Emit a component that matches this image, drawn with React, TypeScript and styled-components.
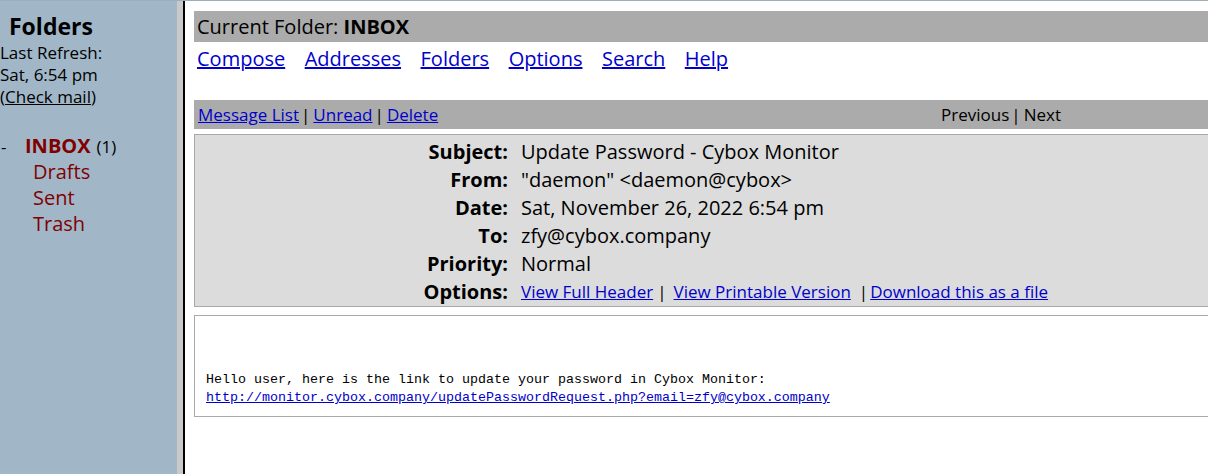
import React from "react";
import styled, { createGlobalStyle } from "styled-components";

const Global = createGlobalStyle`
  html, body { margin: 0; padding: 0; background: #ffffff; }
  body { font-family: "Open Sans", "Noto Sans", sans-serif; overflow: hidden; }
  #root { width: 1208px; height: 474px; }
`;

const Page = styled.div`
  display: flex;
  width: 1208px;
  height: 474px;
  border-top: 1px solid #9fafba;
  box-sizing: border-box;
  overflow: hidden;
`;

const LeftFrame = styled.aside`
  width: 177px;
  flex: none;
  background: #a1b7c8;
  color: #000;
  padding-top: 9px;
  box-sizing: border-box;
`;

const FrameBorder = styled.div`
  width: 6px;
  flex: none;
  background: #c9c9c9;
  border-right: 2px solid #000;
`;

const Title = styled.div`
  font-weight: 700;
  font-size: 23px;
  line-height: 32px;
  padding-left: 9px;
`;

const Info = styled.div`
  font-size: 17px;
  line-height: 22px;
`;

const CheckLink = styled.a`
  color: #000;
  text-decoration: underline;
`;

const FolderList = styled.div`
  margin-top: 25px;
  display: flex;
  flex-direction: column;
`;

const FolderRow = styled.div<{ $indent: number }>`
  display: flex;
  align-items: baseline;
  height: 26px;
  line-height: 26px;
  padding-left: ${(p) => p.$indent}px;
  white-space: nowrap;
`;

const Dash = styled.span`
  font-size: 17px;
  width: 24px;
`;

const FolderName = styled.a<{ $bold?: boolean }>`
  color: #800000;
  font-size: 20px;
  font-weight: ${(p) => (p.$bold ? 700 : 400)};
  text-decoration: none;
`;

const Count = styled.span`
  font-size: 17px;
  margin-left: 6px;
`;

const RightFrame = styled.main`
  flex: 1;
  padding: 10px 0 0 9px;
  min-width: 0;
`;

const FolderBar = styled.div`
  background: #ababab;
  height: 31px;
  line-height: 31px;
  font-size: 20px;
  padding-left: 3px;
  color: #000;
  white-space: nowrap;
`;

const Nav = styled.nav`
  display: flex;
  gap: 19.5px;
  padding-left: 3px;
  height: 58px;
  padding-top: 3px;
  box-sizing: border-box;
  line-height: 28px;
`;

const NavLink = styled.a`
  font-size: 20px;
  color: #0000cc;
  text-decoration: underline;
`;

const MsgBar = styled.div`
  background: #ababab;
  height: 29px;
  display: flex;
  align-items: center;
  justify-content: space-between;
  font-size: 17px;
  padding-left: 4px;
  padding-right: 147px;
  white-space: nowrap;
`;

const SmallLink = styled.a`
  color: #0000cc;
  text-decoration: underline;
`;

const Pipe = styled.span<{ $l?: number; $r?: number }>`
  padding-left: ${(p) => p.$l ?? 2}px;
  padding-right: ${(p) => p.$r ?? 3}px;
`;

const HeaderBox = styled.section`
  margin-top: 5px;
  background: #dcdcdc;
  border: 1px solid #a9a9a9;
  border-right: none;
  padding-top: 2px;
  padding-bottom: 1px;
  display: grid;
  grid-template-columns: 313px 1fr;
  grid-auto-rows: 28px;
  align-items: center;
`;

const Label = styled.div`
  text-align: right;
  font-weight: 700;
  font-size: 20px;
  white-space: nowrap;
`;

const Value = styled.div<{ $small?: boolean }>`
  padding-left: 13px;
  font-size: ${(p) => (p.$small ? 17 : 20)}px;
  white-space: nowrap;
`;

const BodyBox = styled.section`
  margin-top: 8px;
  border: 1px solid #a9a9a9;
  border-right: none;
  padding: 55px 0 10px 11px;
  height: 102px;
  box-sizing: border-box;
`;

const Pre = styled.pre`
  margin: 0;
  font-family: "Liberation Mono", "DejaVu Sans Mono", monospace;
  font-size: 13.33px;
  line-height: 18px;
  color: #000;
`;

const BodyLink = styled.a`
  color: #0000cc;
  text-decoration: underline;
`;

const headers: [string, string][] = [
  ["Subject:", "Update Password - Cybox Monitor"],
  ["From:", "\"daemon\" <daemon@cybox>"],
  ["Date:", "Sat, November 26, 2022 6:54 pm"],
  ["To:", "zfy@cybox.company"],
  ["Priority:", "Normal"],
];

export default function App() {
  return (
    <>
      <Global />
      <Page>
        <LeftFrame>
          <Title>Folders</Title>
          <Info>Last Refresh:</Info>
          <Info>Sat, 6:54 pm</Info>
          <Info>
            (<CheckLink href="#">Check mail</CheckLink>)
          </Info>
          <FolderList>
            <FolderRow $indent={1}>
              <Dash>-</Dash>
              <FolderName $bold href="#">INBOX</FolderName>
              <Count>(1)</Count>
            </FolderRow>
            <FolderRow $indent={33}>
              <FolderName href="#">Drafts</FolderName>
            </FolderRow>
            <FolderRow $indent={33}>
              <FolderName href="#">Sent</FolderName>
            </FolderRow>
            <FolderRow $indent={33}>
              <FolderName href="#">Trash</FolderName>
            </FolderRow>
          </FolderList>
        </LeftFrame>
        <FrameBorder />
        <RightFrame>
          <FolderBar>
            Current Folder: <b>INBOX</b>
          </FolderBar>
          <Nav>
            <NavLink href="#">Compose</NavLink>
            <NavLink href="#">Addresses</NavLink>
            <NavLink href="#">Folders</NavLink>
            <NavLink href="#">Options</NavLink>
            <NavLink href="#">Search</NavLink>
            <NavLink href="#">Help</NavLink>
          </Nav>
          <MsgBar>
            <span>
              <SmallLink href="#">Message List</SmallLink>
              <Pipe>|</Pipe>
              <SmallLink href="#">Unread</SmallLink>
              <Pipe>|</Pipe>
              <SmallLink href="#">Delete</SmallLink>
            </span>
            <span>
              Previous<Pipe>|</Pipe>Next
            </span>
          </MsgBar>
          <HeaderBox>
            {headers.map(([l, v]) => (
              <React.Fragment key={l}>
                <Label>{l}</Label>
                <Value>{v}</Value>
              </React.Fragment>
            ))}
            <Label>Options:</Label>
            <Value $small>
              <SmallLink href="#">View Full Header</SmallLink>
              <Pipe $l={4} $r={7}>|</Pipe>
              <SmallLink href="#">View Printable Version</SmallLink>
              <Pipe $l={8} $r={2}>|</Pipe>
              <SmallLink href="#">Download this as a file</SmallLink>
            </Value>
          </HeaderBox>
          <BodyBox>
            <Pre>
              {"Hello user, here is the link to update your password in Cybox Monitor:\n"}
              <BodyLink href="#">
                http://monitor.cybox.company/updatePasswordRequest.php?email=zfy@cybox.company
              </BodyLink>
            </Pre>
          </BodyBox>
        </RightFrame>
      </Page>
    </>
  );
}
